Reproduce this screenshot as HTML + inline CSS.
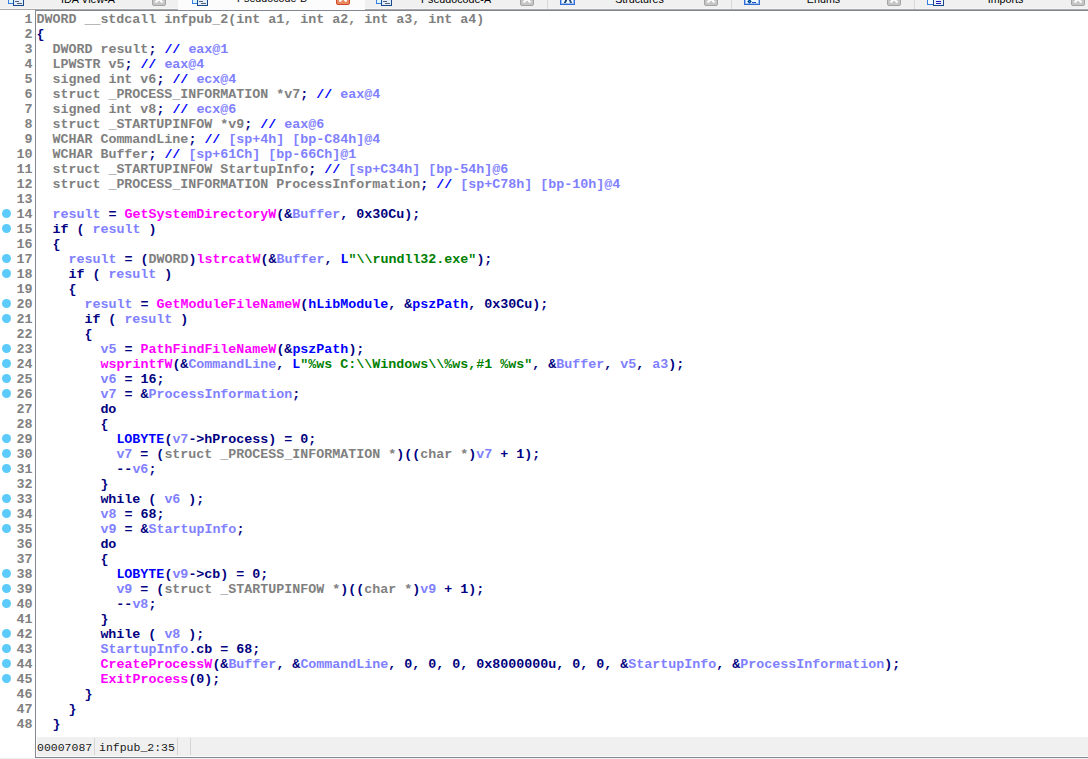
<!DOCTYPE html>
<html><head><meta charset="utf-8">
<style>
html,body{margin:0;padding:0;}
body{width:1088px;height:759px;position:relative;overflow:hidden;background:#fff;font-family:"Liberation Sans",sans-serif;}
#tabs{position:absolute;left:0;top:0;width:1088px;height:10px;background:#f0f0f0;overflow:hidden;}
#tabhi{position:absolute;left:0;top:8px;width:1088px;height:1px;background:#f6f6f6;}
#tabline{position:absolute;left:0;top:9px;width:1088px;height:1px;background:#a9a9a9;}
#frame{position:absolute;left:35px;top:10px;width:1053px;height:748px;border-top:1px solid #828790;border-left:1px solid #828790;border-bottom:1px solid #828790;box-sizing:border-box;}
#bottom{position:absolute;left:0;top:758px;width:1088px;height:1px;background:#f0f0f0;}
.code{font-family:"Liberation Mono",monospace;font-size:13.333px;line-height:15px;font-weight:bold;color:#000080;white-space:pre;}
.l{position:absolute;left:36.4px;height:15px;}
.ln{position:absolute;left:0;width:32.5px;text-align:right;color:#808080;height:15px;}
.dot{position:absolute;left:2px;width:9px;height:9px;border-radius:50%;background:#5ccbfc;}
i{font-style:normal;}
.act{position:absolute;top:0;height:10px;background:#fcfcfc;}
.tsep{position:absolute;top:0;width:1px;height:9px;background:#d9d9d9;}
.tt{position:absolute;top:-7px;height:13px;line-height:13px;font-size:10.7px;color:#000;text-align:center;white-space:nowrap;}
.cl{position:absolute;top:-8px;width:12px;height:12px;border:1px solid #a4a4a4;border-radius:2px;background:#c6c6c6;overflow:hidden;}
.cl.red{border-color:#d2452a;background:#e98a5e;}
.cl span,.cl b{position:absolute;top:2px;left:5px;width:2px;height:12px;background:#fff;}
.cl span{transform:rotate(45deg);top:1px;height:10px;}
.cl b{transform:rotate(-45deg);top:1px;height:10px;}
.ico{position:absolute;box-sizing:border-box;}

i.g{color:#808080;} i.b{color:#0000ff;} i.v{color:#8080ff;} i.f{color:#ff00ff;} i.s{color:#008000;} i.h{color:transparent;}
#status{position:absolute;left:37px;top:737px;width:1051px;height:19px;background:#f0f0f0;font-family:"Liberation Mono",monospace;font-size:11.5px;color:#1a1a1a;}
#status .t{position:absolute;top:3.5px;white-space:pre;}
#status .sep{position:absolute;top:1px;width:1px;height:17px;background:#d5d5d5;}
</style></head><body>
<div id="tabs">
<div id="tabhi"></div><div id="tabline"></div>
<div class="act" style="left:178px;width:187px"></div>
<div class="tsep" style="left:547px"></div>
<div class="tsep" style="left:731px"></div>
<div class="tsep" style="left:914px"></div>
<div class="ico" style="left:8px;top:-6px;width:8px;height:10px;border:1px solid #3a7be0;background:#def6ff"></div>
<div class="ico" style="left:13px;top:-6px;width:11px;height:12px;border:1px solid #174887;background:#e2edfb"></div>
<div class="ico" style="left:15px;top:1px;width:4px;height:1px;background:#5d6670"></div>
<div class="ico" style="left:17px;top:3px;width:5px;height:1px;background:#5d6670"></div>
<div class="ico" style="left:192px;top:-6px;width:8px;height:10px;border:1px solid #3a7be0;background:#def6ff"></div>
<div class="ico" style="left:197px;top:-6px;width:11px;height:12px;border:1px solid #174887;background:#e2edfb"></div>
<div class="ico" style="left:199px;top:1px;width:4px;height:1px;background:#5d6670"></div>
<div class="ico" style="left:201px;top:3px;width:5px;height:1px;background:#5d6670"></div>
<div class="ico" style="left:376px;top:-6px;width:8px;height:10px;border:1px solid #3a7be0;background:#def6ff"></div>
<div class="ico" style="left:381px;top:-6px;width:11px;height:12px;border:1px solid #174887;background:#e2edfb"></div>
<div class="ico" style="left:383px;top:1px;width:4px;height:1px;background:#5d6670"></div>
<div class="ico" style="left:385px;top:3px;width:5px;height:1px;background:#5d6670"></div>
<div class="ico" style="left:560px;top:-6px;width:15px;height:11px;border:1px solid #2f6cd8;box-shadow:inset 0 0 0 1px #9dbcf0;background:#f4fbff"></div>
<div class="ico" style="left:565px;top:-2px;width:2px;height:5px;background:#123a6a;transform:skewX(-25deg)"></div>
<div class="ico" style="left:569px;top:-2px;width:2px;height:5px;background:#2a4f7a;transform:skewX(25deg)"></div>
<div class="ico" style="left:744px;top:-6px;width:16px;height:11px;border:1px solid #2f6cd8;box-shadow:inset 0 0 0 1px #9dbcf0;background:#f0fcff"></div>
<div class="ico" style="left:748px;top:0px;width:3px;height:3px;background:#1ad0f8;border:1px solid #0a2a80;transform:rotate(45deg)"></div>
<div class="ico" style="left:752px;top:2px;width:4px;height:1px;background:#2050c8"></div>
<div class="ico" style="left:927px;top:-6px;width:8px;height:11px;border:1px solid #3a7be0;background:#f2fbff"></div>
<div class="ico" style="left:933px;top:-6px;width:11px;height:12px;border:1px solid #174887;background:#e8f1fc"></div>
<div class="ico" style="left:936px;top:1px;width:5px;height:1px;background:#1f1fb8"></div>
<div class="ico" style="left:936px;top:3px;width:5px;height:1px;background:#1f1fb8"></div>
<div class="tt" style="left:24px;width:128px">IDA View-A</div>
<div class="tt" style="left:208px;width:128px;top:-8px">Pseudocode-B</div>
<div class="tt" style="left:392px;width:128px">Pseudocode-A</div>
<div class="tt" style="left:575px;width:129px">Structures</div>
<div class="tt" style="left:760px;width:127px">Enums</div>
<div class="tt" style="left:942px;width:127px">Imports</div>
<div class="cl" style="left:152px"><span></span><b></b></div>
<div class="cl red" style="left:336px;top:-9px"><span></span><b></b></div>
<div class="cl" style="left:520px"><span></span><b></b></div>
<div class="cl" style="left:704px"><span></span><b></b></div>
<div class="cl" style="left:887px"><span></span><b></b></div>
<div class="cl" style="left:1071px"><span></span><b></b></div>
</div>
<div id="frame"></div>
<div class="code">
<div class="ln" style="top:12px">1</div>
<div class="ln" style="top:27px">2</div>
<div class="ln" style="top:42px">3</div>
<div class="ln" style="top:57px">4</div>
<div class="ln" style="top:72px">5</div>
<div class="ln" style="top:87px">6</div>
<div class="ln" style="top:102px">7</div>
<div class="ln" style="top:117px">8</div>
<div class="ln" style="top:132px">9</div>
<div class="ln" style="top:147px">10</div>
<div class="ln" style="top:162px">11</div>
<div class="ln" style="top:177px">12</div>
<div class="ln" style="top:192px">13</div>
<div class="ln" style="top:207px">14</div>
<div class="dot" style="top:208.6px"></div>
<div class="ln" style="top:222px">15</div>
<div class="dot" style="top:223.6px"></div>
<div class="ln" style="top:237px">16</div>
<div class="ln" style="top:252px">17</div>
<div class="dot" style="top:253.6px"></div>
<div class="ln" style="top:267px">18</div>
<div class="dot" style="top:268.6px"></div>
<div class="ln" style="top:282px">19</div>
<div class="ln" style="top:297px">20</div>
<div class="dot" style="top:298.6px"></div>
<div class="ln" style="top:312px">21</div>
<div class="dot" style="top:313.6px"></div>
<div class="ln" style="top:327px">22</div>
<div class="ln" style="top:342px">23</div>
<div class="dot" style="top:343.6px"></div>
<div class="ln" style="top:357px">24</div>
<div class="dot" style="top:358.6px"></div>
<div class="ln" style="top:372px">25</div>
<div class="dot" style="top:373.6px"></div>
<div class="ln" style="top:387px">26</div>
<div class="dot" style="top:388.6px"></div>
<div class="ln" style="top:402px">27</div>
<div class="ln" style="top:417px">28</div>
<div class="ln" style="top:432px">29</div>
<div class="dot" style="top:433.6px"></div>
<div class="ln" style="top:447px">30</div>
<div class="dot" style="top:448.6px"></div>
<div class="ln" style="top:462px">31</div>
<div class="dot" style="top:463.6px"></div>
<div class="ln" style="top:477px">32</div>
<div class="ln" style="top:492px">33</div>
<div class="dot" style="top:493.6px"></div>
<div class="ln" style="top:507px">34</div>
<div class="dot" style="top:508.6px"></div>
<div class="ln" style="top:522px">35</div>
<div class="dot" style="top:523.6px"></div>
<div class="ln" style="top:537px">36</div>
<div class="ln" style="top:552px">37</div>
<div class="ln" style="top:567px">38</div>
<div class="dot" style="top:568.6px"></div>
<div class="ln" style="top:582px">39</div>
<div class="dot" style="top:583.6px"></div>
<div class="ln" style="top:597px">40</div>
<div class="dot" style="top:598.6px"></div>
<div class="ln" style="top:612px">41</div>
<div class="ln" style="top:627px">42</div>
<div class="dot" style="top:628.6px"></div>
<div class="ln" style="top:642px">43</div>
<div class="dot" style="top:643.6px"></div>
<div class="ln" style="top:657px">44</div>
<div class="dot" style="top:658.6px"></div>
<div class="ln" style="top:672px">45</div>
<div class="dot" style="top:673.6px"></div>
<div class="ln" style="top:687px">46</div>
<div class="ln" style="top:702px">47</div>
<div class="ln" style="top:717px">48</div>
<div class="l" style="top:12px"><i class="g">DWORD __stdcall infpub_2(int a1, int a2, int a3, int a4)</i></div>
<div class="l" style="top:27px">{</div>
<div class="l" style="top:42px">  <i class="g">DWORD result</i>; <i class="b">//</i> <i class="v">eax@1</i></div>
<div class="l" style="top:57px">  <i class="g">LPWSTR v5</i>; <i class="b">//</i> <i class="v">eax@4</i></div>
<div class="l" style="top:72px">  <i class="g">signed int v6</i>; <i class="b">//</i> <i class="v">ecx@4</i></div>
<div class="l" style="top:87px">  <i class="g">struct _PROCESS_INFORMATION *v7</i>; <i class="b">//</i> <i class="v">eax@4</i></div>
<div class="l" style="top:102px">  <i class="g">signed int v8</i>; <i class="b">//</i> <i class="v">ecx@6</i></div>
<div class="l" style="top:117px">  <i class="g">struct _STARTUPINFOW *v9</i>; <i class="b">//</i> <i class="v">eax@6</i></div>
<div class="l" style="top:132px">  <i class="g">WCHAR CommandLine</i>; <i class="b">//</i> <i class="v">[sp+4h] [bp-C84h]@4</i></div>
<div class="l" style="top:147px">  <i class="g">WCHAR Buffer</i>; <i class="b">//</i> <i class="v">[sp+61Ch] [bp-66Ch]@1</i></div>
<div class="l" style="top:162px">  <i class="g">struct _STARTUPINFOW StartupInfo</i>; <i class="b">//</i> <i class="v">[sp+C34h] [bp-54h]@6</i></div>
<div class="l" style="top:177px">  <i class="g">struct _PROCESS_INFORMATION ProcessInformation</i>; <i class="b">//</i> <i class="v">[sp+C78h] [bp-10h]@4</i></div>
<div class="l" style="top:192px"></div>
<div class="l" style="top:207px">  <i class="v">result</i> = <i class="f">GetSystemDirectoryW</i>(&amp;<i class="v">Buffer</i>, 0x30Cu);</div>
<div class="l" style="top:222px">  if ( <i class="v">result</i> )</div>
<div class="l" style="top:237px">  {</div>
<div class="l" style="top:252px">    <i class="v">result</i> = (<i class="g">DWORD</i>)<i class="f">lstrcatW</i>(&amp;<i class="v">Buffer</i>, <i class="b">L</i><i class="s">&quot;\\rundll32.exe&quot;</i>);</div>
<div class="l" style="top:267px">    if ( <i class="v">result</i> )</div>
<div class="l" style="top:282px">    {</div>
<div class="l" style="top:297px">      <i class="v">result</i> = <i class="f">GetModuleFileNameW</i>(<i class="b">hLibModule</i>, &amp;<i class="b">pszPath</i>, 0x30Cu);</div>
<div class="l" style="top:312px">      if ( <i class="v">result</i> )</div>
<div class="l" style="top:327px">      {</div>
<div class="l" style="top:342px">        <i class="v">v5</i> = <i class="f">PathFindFileNameW</i>(&amp;<i class="b">pszPath</i>);</div>
<div class="l" style="top:357px">        <i class="f">wsprintfW</i>(&amp;<i class="v">CommandLine</i>, <i class="b">L</i><i class="s">&quot;%ws C:\\Windows\\%ws,#1 %ws&quot;</i>, &amp;<i class="v">Buffer</i>, <i class="v">v5</i>, <i class="v">a3</i>);</div>
<div class="l" style="top:372px">        <i class="v">v6</i> = 16;</div>
<div class="l" style="top:387px">        <i class="v">v7</i> = &amp;<i class="v">ProcessInformation</i>;</div>
<div class="l" style="top:402px">        do</div>
<div class="l" style="top:417px">        {</div>
<div class="l" style="top:432px">          <i class="b">LOBYTE</i>(<i class="v">v7</i>-&gt;hProcess) = 0;</div>
<div class="l" style="top:447px">          <i class="v">v7</i> = (<i class="g">struct _PROCESS_INFORMATION *</i>)((<i class="g">char *</i>)<i class="v">v7</i> + 1);</div>
<div class="l" style="top:462px">          --<i class="v">v6</i>;</div>
<div class="l" style="top:477px">        }</div>
<div class="l" style="top:492px">        while ( <i class="v">v6</i> );</div>
<div class="l" style="top:507px">        <i class="v">v8</i> = 68;</div>
<div class="l" style="top:522px">        <i class="v">v9</i> = &amp;<i class="v">StartupInfo</i>;</div>
<div class="l" style="top:537px">        do</div>
<div class="l" style="top:552px">        {</div>
<div class="l" style="top:567px">          <i class="b">LOBYTE</i>(<i class="v">v9</i>-&gt;cb) = 0;</div>
<div class="l" style="top:582px">          <i class="v">v9</i> = (<i class="g">struct _STARTUPINFOW *</i>)((<i class="g">char *</i>)<i class="v">v9</i> + 1);</div>
<div class="l" style="top:597px">          --<i class="v">v8</i>;</div>
<div class="l" style="top:612px">        }</div>
<div class="l" style="top:627px">        while ( <i class="v">v8</i> );</div>
<div class="l" style="top:642px">        <i class="v">StartupInfo</i>.cb = 68;</div>
<div class="l" style="top:657px">        <i class="f">CreateProcessW</i>(&amp;<i class="v">Buffer</i>, &amp;<i class="v">CommandLine</i>, 0, 0, 0, 0x8000000u, 0, 0, &amp;<i class="v">StartupInfo</i>, &amp;<i class="v">ProcessInformation</i>);</div>
<div class="l" style="top:672px">        <i class="f">ExitProcess</i>(0);</div>
<div class="l" style="top:687px">      }</div>
<div class="l" style="top:702px">    }</div>
<div class="l" style="top:717px">  }</div>
</div>
<div id="status">
<div class="t" style="left:0px">00007087</div>
<div class="sep" style="left:57px"></div>
<div class="t" style="left:62px">infpub_2:35</div>
<div class="sep" style="left:140px"></div>
<div class="sep" style="left:153px"></div>
</div>
<div id="bottom"></div>
</body></html>
